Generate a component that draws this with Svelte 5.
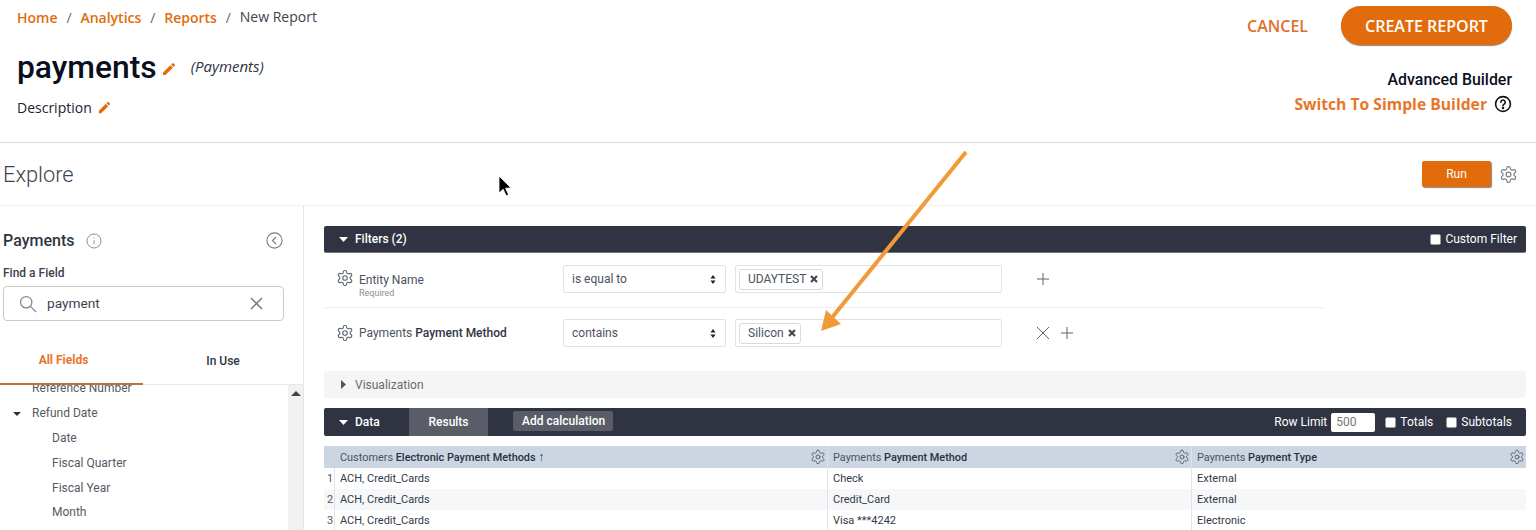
<script>
  const crumbs = ['Home', 'Analytics', 'Reports'];
  const fields = [
    { label: 'Reference Number', level: 1 },
    { label: 'Refund Date', level: 1, open: true },
    { label: 'Date', level: 2 },
    { label: 'Fiscal Quarter', level: 2 },
    { label: 'Fiscal Year', level: 2 },
    { label: 'Month', level: 2 }
  ];
  const rows = [
    ['ACH, Credit_Cards', 'Check', 'External'],
    ['ACH, Credit_Cards', 'Credit_Card', 'External'],
    ['ACH, Credit_Cards', 'Visa ***4242', 'Electronic']
  ];
</script>

{#snippet gear(size)}
  <svg class="gear" width={size} height={size} viewBox="0 0 24 24" fill="none" stroke="currentColor" stroke-width="1.5" stroke-linecap="round" stroke-linejoin="round">
    <path d="M12.22 2h-.44a2 2 0 0 0-2 2v.18a2 2 0 0 1-1 1.73l-.43.25a2 2 0 0 1-2 0l-.15-.08a2 2 0 0 0-2.73.73l-.22.38a2 2 0 0 0 .73 2.73l.15.1a2 2 0 0 1 1 1.72v.51a2 2 0 0 1-1 1.74l-.15.09a2 2 0 0 0-.73 2.73l.22.38a2 2 0 0 0 2.73.73l.15-.08a2 2 0 0 1 2 0l.43.25a2 2 0 0 1 1 1.73V20a2 2 0 0 0 2 2h.44a2 2 0 0 0 2-2v-.18a2 2 0 0 1 1-1.73l.43-.25a2 2 0 0 1 2 0l.15.08a2 2 0 0 0 2.73-.73l.22-.39a2 2 0 0 0-.73-2.73l-.15-.08a2 2 0 0 1-1-1.74v-.5a2 2 0 0 1 1-1.74l.15-.09a2 2 0 0 0 .73-2.73l-.22-.38a2 2 0 0 0-2.73-.73l-.15.08a2 2 0 0 1-2 0l-.43-.25a2 2 0 0 1-1-1.73V4a2 2 0 0 0-2-2z"/>
    <circle cx="12" cy="12" r="3"/>
  </svg>
{/snippet}

{#snippet pencil(size)}
  <svg width={size} height={size} viewBox="0 0 24 24" fill="#e26c0c">
    <path d="M3 17.25V21h3.75L17.81 9.94l-3.75-3.75L3 17.25zM20.71 7.04a1 1 0 0 0 0-1.41l-2.34-2.34a1 1 0 0 0-1.41 0l-1.83 1.83 3.75 3.75 1.83-1.83z"/>
  </svg>
{/snippet}

{#snippet plus()}
  <svg width="14" height="14" viewBox="0 0 14 14" stroke="#5c6470" stroke-width="1" fill="none"><path d="M7 1v12M1 7h12"/></svg>
{/snippet}

{#snippet stepper()}
  <svg class="stepper" width="6" height="9" viewBox="0 0 6 9" fill="#222"><path d="M3 0l2.6 3.4H.4zM3 9L.4 5.6h5.2z"/></svg>
{/snippet}

{#snippet chipX()}
  <svg width="8" height="8" viewBox="0 0 8 8" stroke="#3c4450" stroke-width="2" fill="none"><path d="M1 1l6 6M7 1L1 7"/></svg>
{/snippet}

<div class="page">
  <header class="top">
    <div class="top-left">
      <nav class="crumbs">
        {#each crumbs as c}
          <span class="crumb-link">{c}</span><span class="sep">/</span>
        {/each}
        <span class="crumb-cur">New Report</span>
      </nav>
      <div class="title-row">
        <h1>payments</h1>
        <span class="title-pencil">{@render pencil(16)}</span>
        <span class="subject">(Payments)</span>
      </div>
      <div class="desc">Description {@render pencil(15)}</div>
    </div>
    <div class="top-right">
      <div class="actions">
        <span class="cancel">CANCEL</span>
        <button class="create">CREATE REPORT</button>
      </div>
      <div class="adv">Advanced Builder</div>
      <div class="switch">
        <span>Switch To Simple Builder</span>
        <svg width="18" height="18" viewBox="0 0 18 18" fill="none" stroke="#111" stroke-width="1.6">
          <circle cx="9" cy="9" r="7.4"/>
          <path d="M6.8 7.2a2.2 2.2 0 1 1 3.4 1.9c-.8.5-1.2.9-1.2 1.7" stroke-linecap="round"/>
          <circle cx="9" cy="13" r=".5" fill="#111"/>
        </svg>
      </div>
    </div>
  </header>

  <div class="explore-bar">
    <span class="explore">Explore</span>
    <div class="run-wrap">
      <button class="run">Run</button>
      <span class="run-gear">{@render gear(19)}</span>
    </div>
  </div>

  <div class="body">
    <aside class="side">
      <div class="side-head">
        <span class="side-title">Payments</span>
        <svg class="info" width="16" height="16" viewBox="0 0 16 16" fill="none" stroke="#8b9096" stroke-width="1">
          <circle cx="8" cy="8" r="7"/><path d="M8 7.2v4M8 4.6v1.1"/>
        </svg>
        <svg class="collapse" width="17" height="17" viewBox="0 0 17 17" fill="none" stroke="#777d84" stroke-width="1.1">
          <circle cx="8.5" cy="8.5" r="7.6"/><path d="M10 5l-3.5 3.5L10 12"/>
        </svg>
      </div>
      <div class="find">Find a Field</div>
      <div class="search">
        <svg width="18" height="18" viewBox="0 0 19 19" fill="none" stroke="#83888e" stroke-width="1.3">
          <circle cx="7.6" cy="7.6" r="6"/><path d="M12 12l6 6"/>
        </svg>
        <span class="search-text">payment</span>
        <svg class="clear" width="13" height="13" viewBox="0 0 13 13" fill="none" stroke="#70757b" stroke-width="1.4"><path d="M1 1l11 11M12 1L1 12"/></svg>
      </div>
      <div class="tabs">
        <span class="tab active">All Fields</span>
        <span class="tab">In Use</span>
      </div>
      <div class="field-wrap">
        <ul class="fields">
          {#each fields as f}
            <li class:sub={f.level === 2}>
              {#if f.open}<svg class="caret" width="8" height="4" viewBox="0 0 8 4" fill="#333"><path d="M0 0h8L4 4z"/></svg>{/if}
              {f.label}
            </li>
          {/each}
        </ul>
        <div class="scroll"><svg width="10" height="5" viewBox="0 0 10 5" fill="#444"><path d="M0 5L5 0l5 5z"/></svg></div>
      </div>
    </aside>

    <main class="main">
      <div class="bar filters-bar">
        <div class="bar-left">
          <svg width="9" height="5" viewBox="0 0 9 5" fill="#fff"><path d="M0 0h9L4.5 5z"/></svg>
          <span>Filters (2)</span>
        </div>
        <label class="check-label"><span class="check"></span>Custom Filter</label>
      </div>

      <div class="filter first">
        <div class="f-name">
          <span class="f-gear">{@render gear(18)}</span>
          <div class="f-text">
            <div>Entity Name</div>
            <div class="req">Required</div>
          </div>
        </div>
        <div class="select"><span>is equal to</span>{@render stepper()}</div>
        <div class="multi"><span class="chip">UDAYTEST {@render chipX()}</span></div>
        <div class="f-actions first-actions">{@render plus()}</div>
      </div>
      <div class="filter">
        <div class="f-name">
          <span class="f-gear">{@render gear(18)}</span>
          <div class="f-text">Payments <b>Payment Method</b></div>
        </div>
        <div class="select"><span>contains</span>{@render stepper()}</div>
        <div class="multi"><span class="chip">Silicon {@render chipX()}</span></div>
        <div class="f-actions">
          <svg width="14" height="14" viewBox="0 0 14 14" stroke="#5c6470" stroke-width="1" fill="none"><path d="M1 1l12 12M13 1L1 13"/></svg>
          {@render plus()}
        </div>
      </div>

      <div class="viz">
        <svg width="5" height="9" viewBox="0 0 5 9" fill="#555"><path d="M0 0l5 4.5L0 9z"/></svg>
        <span>Visualization</span>
      </div>

      <div class="bar data-bar">
        <div class="bar-left data-left">
          <svg width="9" height="5" viewBox="0 0 9 5" fill="#fff"><path d="M0 0h9L4.5 5z"/></svg>
          <span>Data</span>
        </div>
        <span class="results">Results</span>
        <span class="add-calc">Add calculation</span>
        <div class="data-right">
          <span>Row Limit</span>
          <span class="limit">500</span>
          <label class="check-label"><span class="check"></span>Totals</label>
          <label class="check-label"><span class="check"></span>Subtotals</label>
        </div>
      </div>

      <div class="table">
        <div class="tr head">
          <div class="idx"></div>
          <div class="td">Customers <b>Electronic Payment Methods</b> <b class="sort">↑</b>{@render gear(16)}</div>
          <div class="td">Payments <b>Payment Method</b>{@render gear(16)}</div>
          <div class="td">Payments <b>Payment Type</b>{@render gear(16)}</div>
        </div>
        {#each rows as r, i}
          <div class="tr" class:alt={i % 2 === 1}>
            <div class="idx">{i + 1}</div>
            {#each r as cell}
              <div class="td">{cell}</div>
            {/each}
          </div>
        {/each}
      </div>
    </main>
  </div>

  <!-- annotation arrow and mouse pointer sit on top of the recording -->
  <svg class="overlay" width="1536" height="530" viewBox="0 0 1536 530">
    <path d="M966 152L830 320" stroke="#f29a38" stroke-width="4" fill="none"/>
    <path d="M821 331L826 310L841 324z" fill="#f29a38"/>
    <path d="M499 176v17l4.2-3.8 3 6.6 2.4-1.1-3-6.4 5.4-.4z" fill="#000" stroke="#fff" stroke-width="0.8"/>
  </svg>
</div>

<style>
  :global(body) {
    margin: 0;
    background: #fff;
  }

  .page {
    position: relative;
    width: 1536px;
    height: 530px;
    overflow: hidden;
    font-family: Roboto, "Liberation Sans", sans-serif;
    color: #333;
  }

  .top {
    display: flex;
    justify-content: space-between;
    height: 142px;
    padding: 0 24px 0 17px;
    border-bottom: 1px solid #d9d9d9;
  }

  .crumbs {
    display: flex;
    align-items: center;
    height: 20px;
    margin-top: 7px;
    font-family: "Open Sans", sans-serif;
    font-size: 14px;
  }

  .crumb-link {
    color: #e26c0c;
    font-weight: 600;
  }

  .sep {
    margin: 0 8.9px;
    color: #666;
  }

  .crumb-cur {
    color: #3b4250;
    margin-top: -1px;
  }

  .title-row {
    display: flex;
    align-items: center;
    margin-top: 19px;
    height: 42px;
  }

  h1 {
    margin: 0;
    font-size: 31.8px;
    font-weight: 500;
    color: #0a0f1e;
  }

  .title-pencil {
    display: flex;
    margin: 3px 0 0 4px;
  }

  .subject {
    margin: -2px 0 0 14px;
    font-family: "Open Sans", sans-serif;
    font-style: italic;
    font-size: 15px;
    color: #2d3340;
  }

  .desc {
    display: flex;
    align-items: center;
    gap: 5px;
    margin-top: 10px;
    font-family: "Open Sans", sans-serif;
    font-size: 14px;
    color: #1c2230;
  }

  .top-right {
    display: flex;
    flex-direction: column;
    align-items: flex-end;
  }

  .actions {
    display: flex;
    align-items: center;
    gap: 33px;
    margin-top: 6px;
  }

  .cancel {
    font-family: "Open Sans", sans-serif;
    font-size: 16px;
    font-weight: 600;
    color: #e0702a;
  }

  .create {
    width: 171px;
    height: 39px;
    border: none;
    border-radius: 20px;
    background: #e26c0c;
    box-shadow: 0 1px 1px #8a8a8a;
    color: #fff;
    font-family: "Open Sans", sans-serif;
    font-size: 16px;
    font-weight: 600;
  }

  .adv {
    margin-top: 25px;
    font-size: 15.9px;
    font-weight: 500;
    color: #0a0f1e;
    line-height: 20px;
  }

  .switch {
    display: flex;
    align-items: center;
    gap: 7px;
    margin-top: 3px;
    font-family: "Open Sans", sans-serif;
    font-size: 15.7px;
    font-weight: 700;
    color: #e8762a;
  }

  .explore-bar {
    display: flex;
    justify-content: space-between;
    align-items: center;
    height: 62px;
    padding: 0 18px 0 3px;
    border-bottom: 1px solid #efefef;
  }

  .explore {
    font-size: 21.8px;
    font-weight: 300;
    color: #3c4350;
  }

  .run-wrap {
    display: flex;
    align-items: center;
    gap: 8px;
  }

  .run {
    width: 69px;
    height: 26px;
    border: none;
    border-radius: 2px;
    background: #e26c0c;
    box-shadow: 1px 1px 1px #888;
    color: #fff;
    font-family: Roboto, sans-serif;
    font-size: 12px;
  }

  .run-gear {
    display: flex;
    color: #7b8088;
  }

  .body {
    display: flex;
    height: 324px;
  }

  .side {
    display: flex;
    flex-direction: column;
    width: 303px;
    flex: none;
    border-right: 1px solid #e6e6e6;
  }

  .side-head {
    display: flex;
    align-items: center;
    height: 20px;
    margin-top: 24px;
    padding: 0 20px 0 3px;
  }

  .side-title {
    font-size: 16px;
    font-weight: 500;
    color: #2f3542;
  }

  .info {
    margin: 2px 0 0 12px;
  }

  .collapse {
    margin-left: auto;
  }

  .find {
    margin: 16px 0 0 3px;
    font-size: 12px;
    font-weight: 500;
    line-height: 14px;
    color: #3b4250;
  }

  .search {
    display: flex;
    align-items: center;
    box-sizing: border-box;
    width: 281px;
    height: 35px;
    margin: 6px 0 0 3px;
    padding: 0 20px 0 15px;
    border: 1px solid #c9c9c9;
    border-radius: 4px;
  }

  .search-text {
    margin: -2px 0 0 10px;
    font-size: 13.7px;
    color: #3b4250;
  }

  .clear {
    margin-left: auto;
  }

  .tabs {
    display: flex;
    height: 64px;
    box-sizing: border-box;
    border-bottom: 1px solid #eaeaea;
    flex: none;
  }

  .tab {
    display: flex;
    align-items: center;
    justify-content: center;
    width: 143px;
    margin-top: 16px;
    font-size: 12px;
    font-weight: 500;
    color: #2f3542;
  }

  .tab + .tab {
    width: 160px;
  }

  .tab.active {
    box-sizing: border-box;
    padding-right: 16px;
    color: #e8762a;
    font-size: 12px;
    font-weight: 700;
    border-bottom: 2px solid #b8743f;
    margin-bottom: -1px;
  }

  .field-wrap {
    display: flex;
    flex: 1;
    min-height: 0;
    overflow: hidden;
  }

  .fields {
    flex: 1;
    margin: -8.6px 0 0;
    padding: 0;
    list-style: none;
    font-size: 12px;
    color: #555a62;
  }

  .fields li {
    position: relative;
    height: 24.8px;
    line-height: 24.8px;
    padding-left: 32px;
  }

  .fields li.sub {
    padding-left: 52px;
  }

  .caret {
    position: absolute;
    left: 13px;
    top: 11px;
  }

  .scroll {
    display: flex;
    justify-content: center;
    align-items: flex-start;
    width: 15px;
    padding-top: 6px;
    background: #f1f1f1;
  }

  .main {
    flex: 1;
    padding: 20px 10px 0 20px;
    min-width: 0;
  }

  .bar {
    display: flex;
    align-items: center;
    background: #2f3342;
    border-radius: 2px;
    color: #fff;
    font-size: 12px;
    font-weight: 500;
  }

  .filters-bar {
    justify-content: space-between;
    box-sizing: border-box;
    height: 27px;
    padding: 0 9px 0 15px;
    border-bottom: 1px solid #777;
  }

  .bar-left {
    display: flex;
    align-items: center;
    gap: 7px;
  }

  .check-label {
    display: flex;
    align-items: center;
    gap: 4px;
    font-weight: 400;
  }

  .check {
    width: 11px;
    height: 11px;
    background: #fff;
    border: 1px solid #999;
    border-radius: 2px;
    box-sizing: border-box;
  }

  .filter {
    display: grid;
    grid-template-columns: 217px 163px 267px auto;
    column-gap: 9px;
    align-items: center;
    box-sizing: border-box;
    height: 50px;
    padding-left: 13px;
    font-size: 12px;
  }

  .filter.first {
    height: 55px;
    width: 1000px;
    padding-bottom: 2px;
    border-bottom: 1px solid #efefef;
  }

  .f-name {
    display: flex;
    align-items: center;
    gap: 5px;
    margin-left: -1px;
  }

  .first .f-name {
    align-self: start;
    align-items: flex-start;
    margin-top: 16px;
  }

  .f-gear {
    display: flex;
    color: #5c6470;
  }

  .f-text {
    color: #4b5260;
    line-height: 13px;
  }

  .first .f-text {
    margin-top: 5px;
  }

  .f-text b {
    font-weight: 500;
    color: #2f3542;
  }

  .req {
    font-size: 9px;
    line-height: 12px;
    color: #8a8f96;
  }

  .select, .multi {
    display: flex;
    align-items: center;
    box-sizing: border-box;
    height: 28px;
    border: 1px solid #e2e2e2;
    border-radius: 2px;
    font-size: 12px;
    color: #4b5260;
  }

  .select {
    justify-content: space-between;
    padding: 0 9px 1px 8px;
  }

  .stepper {
    margin-top: 1px;
  }

  .multi {
    padding-left: 3px;
  }

  .chip {
    display: inline-flex;
    align-items: center;
    gap: 4px;
    height: 19px;
    padding: 0 4px 0 8px;
    border: 1px solid #dadada;
    border-radius: 3px;
    color: #4b5260;
  }

  .f-actions {
    display: flex;
    align-items: center;
    gap: 10px;
    padding-left: 25px;
  }

  .viz {
    display: flex;
    align-items: center;
    gap: 9px;
    height: 27px;
    margin-top: 13px;
    padding-left: 17px;
    background: #f5f5f5;
    border-radius: 2px;
    font-size: 12px;
    color: #666b72;
  }

  .data-bar {
    height: 28px;
    margin-top: 10px;
  }

  .data-left {
    width: 85px;
    box-sizing: border-box;
    padding-left: 15px;
  }

  .results {
    display: flex;
    align-items: center;
    justify-content: center;
    width: 79px;
    height: 28px;
    background: #5a5d68;
  }

  .add-calc {
    display: flex;
    align-items: center;
    height: 20px;
    margin: -2px 0 0 25px;
    padding: 0 8px 0 9px;
    border-radius: 2px;
    background: #5a5d68;
  }

  .data-right {
    display: flex;
    align-items: center;
    margin-left: auto;
    padding-right: 14px;
    font-weight: 400;
  }

  .limit {
    width: 44px;
    height: 19px;
    margin: 0 10px 0 4px;
    padding-left: 5px;
    box-sizing: border-box;
    line-height: 19px;
    background: #fff;
    border-radius: 2px;
    color: #777;
  }

  .data-right .check-label + .check-label {
    margin-left: 13px;
  }

  .table {
    margin-top: 10px;
    font-size: 11px;
    color: #333a47;
  }

  .tr {
    display: grid;
    grid-template-columns: 11px 493px 364px 334px;
    height: 20.9px;
    line-height: 22.4px;
  }

  .tr.alt {
    background: #f5f7f9;
  }

  .tr.head {
    height: 22px;
    line-height: 23px;
    background: #cbd6e2;
    color: #4b5260;
    font-size: 10.9px;
  }

  .head b {
    font-weight: 500;
    color: #2a3040;
  }

  .head .sort {
    font-size: 12px;
  }

  .idx {
    padding-left: 3px;
    color: #555;
    border-right: 1px solid #dfe3e8;
  }

  .head .idx {
    border-right: none;
  }

  .td {
    position: relative;
    padding-left: 5px;
    border-right: 1px solid #dfe3e8;
    white-space: nowrap;
  }

  .td:last-child {
    border-right: none;
  }

  .head .td :global(.gear) {
    position: absolute;
    right: 1px;
    top: 3px;
    color: #5c6470;
  }

  .overlay {
    position: absolute;
    left: 0;
    top: 0;
    pointer-events: none;
  }
</style>
